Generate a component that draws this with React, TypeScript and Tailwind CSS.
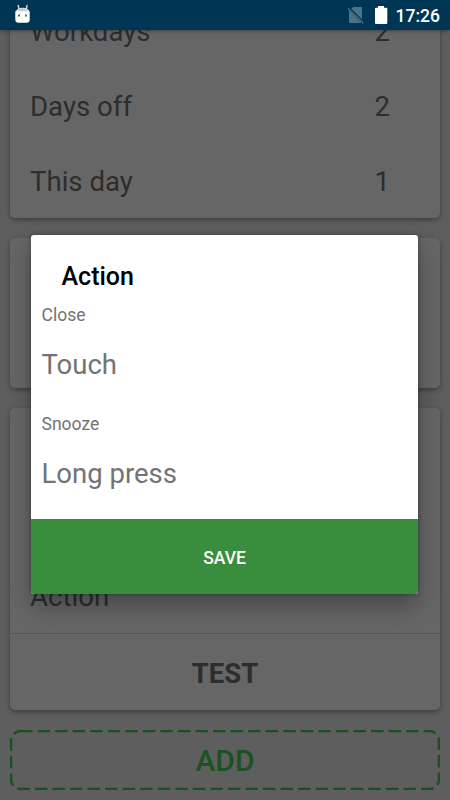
import React from "react";

const cardShadow = "shadow-[0_2px_5px_rgba(0,0,0,0.36)]";

function StatusBar() {
  return (
    <header className="relative z-10 flex h-[30px] shrink-0 items-center bg-[#003655] pr-[10px] pl-[14px] text-white shadow-[0_1px_4px_rgba(0,0,0,0.35)]">
      <svg width="18" height="20" viewBox="0 0 18 20" className="mb-[3px]">
        <path d="M4.2 1.5 L5 5 M13 1.5 L12.3 5" stroke="#dce6ec" strokeWidth="1.3" strokeLinecap="round" />
        <path d="M4 5 Q8.5 2.5 13.5 5 L15.7 7.5 V15.5 Q15.7 18.8 12.5 18.8 H4.5 Q1.3 18.8 1.3 15.5 V7.5 Z" fill="white" />
        <path d="M5 4.8 Q8.5 3.3 12.5 4.8 L14 7.2 H3.3 Z" fill="#c3ccd1" />
        <path d="M4 10.5 h2 v2 h-2z M11 10.5 h2 v2 h-2z" fill="#566872" />
      </svg>
      <div className="grow" />
      <svg width="18" height="18" viewBox="0 0 18 18" className="mr-[9px]">
        <path d="M6.5 1 H14 Q15 1 15 2 V13.2 L4.2 2.8 Z M2 4.5 L14.5 17 H3 Q2 17 2 16 Z" fill="#4d7288" />
        <path d="M1 2.4 L16.2 17.3" stroke="#4d7288" strokeWidth="1.4" />
      </svg>
      <svg width="14" height="20" viewBox="0 0 14 20" className="mr-[8px]">
        <path d="M4 1 H10 V2.7 H12.3 Q13.3 2.7 13.3 3.7 V18 Q13.3 19 12.3 19 H2 Q1 19 1 18 V3.7 Q1 2.7 2 2.7 H4 Z" fill="white" />
      </svg>
      <span className="pt-[2px] text-[17.5px] leading-[20px] font-medium">17:26</span>
    </header>
  );
}

function Row({ label, value }: { label: string; value?: string }) {
  return (
    <div className="flex h-[75px] shrink-0 items-center pt-[3px] pr-[50px] pl-[20px] text-[27.6px] leading-[34px]">
      <span className="grow">{label}</span>
      {value && <span>{value}</span>}
    </div>
  );
}

function Settings() {
  return (
    <main className="flex h-[770px] flex-col justify-end gap-[20px] overflow-hidden px-[10px] pb-[10px] text-[#2d2d2d]">
      <section className={`shrink-0 rounded-[5px] bg-[#666666] ${cardShadow}`}>
        <Row label="Workdays" value="2" />
        <Row label="Days off" value="2" />
        <Row label="This day" value="1" />
      </section>
      <section className={`h-[150px] shrink-0 rounded-[5px] bg-[#666666] ${cardShadow}`} />
      <section className={`flex h-[302px] shrink-0 flex-col justify-end rounded-[5px] bg-[#666666] ${cardShadow}`}>
        <Row label="Action" />
        <div className="flex h-[77px] items-center justify-center border-t border-[#575757] pt-[3px] text-[27.5px] font-bold">
          TEST
        </div>
      </section>
      <button className="grid h-[60px] shrink-0 place-items-center text-[30px] font-medium text-[#1c5120]">
        <svg width="430" height="60" viewBox="0 0 430 60" className="col-start-1 row-start-1">
          <path
            d="M10 0.9 H419 A10 10 0 0 1 429 10.9 V49 A10 10 0 0 1 419 59 H11 A10 10 0 0 1 1 49 V10.9 A10 10 0 0 1 11 0.9"
            fill="none"
            stroke="#1b511f"
            strokeWidth="2.6"
            strokeDasharray="12.5 5.05"
          />
        </svg>
        <span className="col-start-1 row-start-1 pt-[2px] leading-[36px]">ADD</span>
      </button>
    </main>
  );
}

function ActionDialog() {
  return (
    <div
      role="dialog"
      className="absolute top-[235.4px] left-[31px] z-20 flex h-[359px] w-[387px] flex-col overflow-hidden rounded-[3px] bg-white text-[#737373] shadow-[0_12px_24px_rgba(0,0,0,0.3),0_0_4px_rgba(0,0,0,0.3)]"
    >
      <h2 className="mt-[26.5px] ml-[30.5px] text-[25px] leading-[30px] font-medium text-black">Action</h2>
      <p className="mt-[12px] ml-[10.5px] text-[17.5px] leading-[22px]">Close</p>
      <p className="mt-[22px] ml-[10.5px] text-[27.5px] leading-[34px]">Touch</p>
      <p className="mt-[31px] ml-[10.5px] text-[17.5px] leading-[22px]">Snooze</p>
      <p className="mt-[22px] ml-[10.5px] text-[27.5px] leading-[34px]">Long press</p>
      <button className="mt-auto h-[75px] shrink-0 bg-[#388e3c] pt-[2px] text-[17.5px] font-medium text-white">SAVE</button>
    </div>
  );
}

export default function App() {
  return (
    <div className="relative h-[800px] w-[450px] overflow-hidden bg-[#5e5e5e] font-[Roboto,sans-serif]">
      <StatusBar />
      <Settings />
      <ActionDialog />
    </div>
  );
}
